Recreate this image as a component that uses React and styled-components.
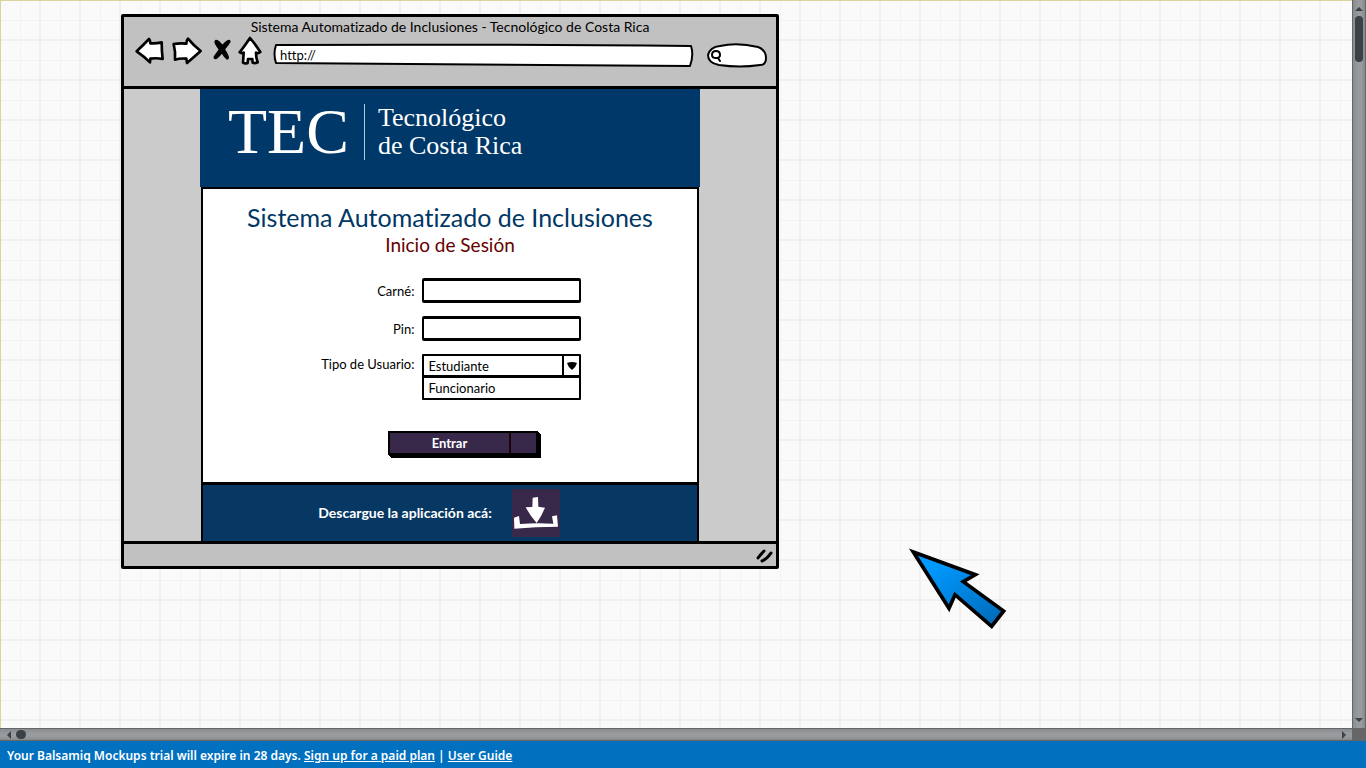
import React from "react";
import styled, { createGlobalStyle } from "styled-components";

const Global = createGlobalStyle`
  * { box-sizing: border-box; }
  body { margin: 0; overflow: hidden; }
  h1, h2, p, ul { margin: 0; padding: 0; }
  button, input, select { font: inherit; color: inherit; }
`;

const sketchFont = `Lato, "Open Sans", sans-serif`;

const Page = styled.div`
  display: grid;
  grid-template-columns: minmax(0, 1fr) 14px;
  grid-template-rows: minmax(0, 1fr) 13px 27px;
  height: 100vh;
  background: #666;
  font-family: ${sketchFont};
  font-size: 13px;
  font-variant-ligatures: none;
  line-height: 20px;
  color: #000;
`;

const Canvas = styled.main`
  position: relative;
  overflow: hidden;
  padding: 13px 80px 20px 120px;
  border-top: 1px solid #dcd29b;
  border-left: 1px solid #dcd29b;
  background-color: #fafafa;
  background-image:
    linear-gradient(#f0f0f0 2px, transparent 2px),
    linear-gradient(90deg, #f0f0f0 2px, transparent 2px),
    linear-gradient(#f3f3f3 1px, transparent 1px),
    linear-gradient(90deg, #f3f3f3 1px, transparent 1px);
  background-size: 40px 40px;
  background-position: 0 -2px, -2px 0, 0 19px, 19px 0;
`;

const ScrollTrack = styled.div`
  display: flex;
  align-items: center;
  justify-content: space-between;
  flex-direction: ${(p) => (p.$vertical ? "column" : "row")};
  padding: ${(p) => (p.$vertical ? "7px 0 6px" : "0 6px 0 7px")};
  border: solid #666;
  border-width: ${(p) => (p.$vertical ? "0 1px" : "1px 0")};
  background: linear-gradient(${(p) => (p.$vertical ? "90deg" : "180deg")}, #888c8f, #979b9e 40%, #979b9e 70%, #85898c);
`;

const ScrollGroup = styled.div`
  display: flex;
  align-items: center;
  gap: 5px;
  flex-direction: ${(p) => (p.$vertical ? "column" : "row")};
`;

const Thumb = styled.div`
  width: ${(p) => (p.$vertical ? "8px" : "10px")};
  height: ${(p) => (p.$vertical ? "46px" : "9px")};
  border-radius: 5px;
  background: #3a4147;
`;

const Window = styled.section`
  position: relative;
  width: 100%;
  max-width: 658px;
  border: 3px solid #000;
  border-radius: 2px;
  background: #cbcbcb;
`;

const WindowHeader = styled.header`
  padding-bottom: 17px;
  border-bottom: 3px solid #000;
  background: #c1c1c1;
`;

const WindowTitle = styled.p`
  font-size: 14px;
  text-align: center;
`;

const Toolbar = styled.div`
  display: flex;
  align-items: flex-start;
  gap: 6px;
  height: 32px;
  padding: 0 6px 0 11px;
`;

const ToolButton = styled.button`
  flex: none;
  width: ${(p) => p.$width}px;
  height: 29px;
  padding: 0;
  border: 0;
  background: none;
  svg { display: block; overflow: visible; }
`;

const SketchField = styled.label`
  position: relative;
  display: flex;
  align-items: flex-start;
  align-self: flex-end;
  flex: ${(p) => (p.$grow ? "1" : "none")};
  width: ${(p) => (p.$grow ? "auto" : "68px")};
  height: 26px;
`;

const FieldOutline = styled.svg`
  position: absolute;
  inset: 0;
  width: 100%;
  height: 100%;
  path {
    fill: #fff;
    stroke: #000;
    stroke-width: 2px;
    stroke-linejoin: round;
    vector-effect: non-scaling-stroke;
  }
`;

const BareInput = styled.input`
  position: relative;
  width: 100%;
  min-width: 0;
  height: 23px;
  padding: 0 10px;
  border: 0;
  outline: 0;
  background: transparent;
`;

const Glass = styled.svg`
  position: relative;
  flex: none;
  margin: 7px 0 0 8px;
`;

const Content = styled.div`
  width: 100%;
  max-width: 500px;
  margin: 0 auto;
`;

const Banner = styled.div`
  display: flex;
  align-items: flex-start;
  height: 98px;
  padding: 15px 28px;
  background: #003869;
  color: #fff;
  font-family: "Liberation Serif", serif;
`;

const BannerMark = styled.div`
  padding-right: 15px;
  border-right: 1px solid #b5c6d6;
  font-size: 64px;
  line-height: 56px;
`;

const BannerName = styled.div`
  padding-left: 13px;
  font-size: 26px;
  line-height: 28px;
`;

const Panel = styled.div`
  margin: 0 1px;
  padding-top: 14px;
  border: solid #000;
  border-width: 2px 2px 3px;
  background: #fff;
`;

const Heading = styled.h1`
  font-size: 25px;
  line-height: 28px;
  font-weight: 400;
  text-align: center;
  color: #003764;
`;

const Subheading = styled.h2`
  font-size: 19px;
  line-height: 28px;
  font-weight: 400;
  text-align: center;
  color: #660000;
`;

const Form = styled.form`
  padding: 19px 0 27px;
`;

const FormRow = styled.div`
  display: grid;
  grid-template-columns: calc(43% - 1px) 159px;
  column-gap: 8px;
  margin-bottom: ${(p) => (p.$last ? "31px" : "13px")};
`;

const RowLabel = styled.label`
  padding-top: ${(p) => (p.$raised ? "0" : "3px")};
  text-align: right;
`;

const TextBox = styled.input`
  width: 100%;
  height: 25px;
  padding: 0 5px;
  border: 2px solid #000;
  border-top-width: 3px;
  border-bottom-width: 3px;
  border-radius: 2px;
  background: #fff;
`;

const SelectWrap = styled.div`
  position: relative;
  margin-bottom: -2px;
  svg { position: absolute; right: 4px; top: 8px; pointer-events: none; }
  &::after {
    content: "";
    position: absolute;
    right: 17px;
    top: 0;
    width: 2px;
    height: 100%;
    background: #000;
  }
`;

const Select = styled.select`
  display: block;
  appearance: none;
  width: 100%;
  height: 23px;
  padding: 0 4px;
  border: 2px solid #000;
  border-radius: 1px;
  background: #fff;
`;

const Options = styled.ul`
  position: relative;
  list-style: none;
  padding: 0 4px;
  border: 2px solid #000;
  border-top-width: 3px;
  border-radius: 1px;
  background: #fff;
`;

const Submit = styled.button`
  display: flex;
  width: 150px;
  height: 24px;
  margin-left: 185px;
  padding: 0;
  border: 2px solid #000;
  background: #38284a;
  box-shadow: 1px 1px #000, 2px 2px #000, 3px 3px #000;
  color: #fff;
  font-weight: 700;
  line-height: 20px;
`;

const SubmitText = styled.span`
  flex: 1;
`;

const SubmitSide = styled.span`
  width: 27px;
  height: 20px;
  border-left: 2px solid #1c0308;
`;

const Download = styled.div`
  display: flex;
  align-items: center;
  justify-content: center;
  gap: 20px;
  margin: 0 1px;
  height: 56px;
  padding-right: 22px;
  border: solid #000;
  border-width: 0 2px;
  background: #073763;
  color: #fff;
  font-size: 14px;
  font-weight: 700;
`;

const DownloadButton = styled.button`
  width: 48px;
  height: 48px;
  padding: 0;
  border: 0;
  background: #38284a;
  svg { display: block; }
`;

const WindowFooter = styled.footer`
  display: flex;
  justify-content: flex-end;
  height: 25px;
  padding: 5px 2px 0;
  border-top: 3px solid #000;
  background: #c1c1c1;
`;

const Pointer = styled.svg`
  position: absolute;
  left: 906px;
  top: 546px;
`;

const Notice = styled.footer`
  grid-column: 1 / -1;
  padding: 5px 7px 0;
  background: #0070bf;
  color: #fff;
  font-family: "Noto Sans", "Open Sans", sans-serif;
  font-size: 12px;
  font-weight: 600;
  line-height: 20px;
  a { color: inherit; }
`;

const iconStroke = { fill: "#fff", stroke: "#000", strokeWidth: 8, strokeLinejoin: "round", strokeLinecap: "round" };

function ToolIcon({ label, x, width, children }) {
  return (
    <ToolButton type="button" aria-label={label} $width={width}>
      <svg width={width} height="29" viewBox={`${x} 87 ${width * 3} 87`}>{children}</svg>
    </ToolButton>
  );
}

function Arrow({ d, w, h }) {
  return (
    <svg width={w} height={h} viewBox={`0 0 ${w} ${h}`}><path d={d} fill="#3a4147" /></svg>
  );
}

export default function App() {
  return (
    <Page>
      <Global />
      <Canvas>
        <Window>
          <WindowHeader>
            <WindowTitle>Sistema Automatizado de Inclusiones - Tecnológico de Costa Rica</WindowTitle>
            <Toolbar>
              <ToolIcon label="Atrás" x={60} width={30}>
                <path {...iconStroke} d="M65 130 Q84 112 102 93 Q106 97 106 106 Q124 107 140 103 Q140 130 143 153 Q125 149 106 152 L105 163 Q87 145 65 130Z" />
              </ToolIcon>
              <ToolIcon label="Adelante" x={168} width={32}>
                <path {...iconStroke} d="M176 108 Q195 105 214 107 Q214 98 219 92 Q236 113 257 129 Q237 147 216 165 L214 152 Q196 150 180 155 Q182 132 176 108Z" />
              </ToolIcon>
              <ToolIcon label="Detener" x={282} width={23}>
                <path stroke="#000" strokeWidth="4" strokeLinejoin="round" d="M303 97 Q298 99 302 108 Q308 118 313 125 Q304 137 298 146 Q296 153 304 151 Q313 145 321 134 Q329 148 336 153 Q342 152 339 144 Q334 132 328 124 Q339 111 345 101 Q345 96 339 98 Q329 104 322 113 Q313 99 303 97Z" />
              </ToolIcon>
              <ToolIcon label="Inicio" x={369} width={26}>
                <path {...iconStroke} d="M405 90 Q421 109 436 132 Q430 137 423 134 Q423 150 428 163 Q419 167 413 164 L412 153 L399 153 L398 165 Q390 168 384 164 L386 134 Q379 137 374 133 Q389 114 405 90Z" />
              </ToolIcon>
              <SketchField $grow>
                <FieldOutline viewBox="0 0 426 26" preserveAspectRatio="none">
                  <path d="M6 2 Q200 1 421 3 Q424 12 420 23 Q210 22 6 20 Q3 11 6 2Z" />
                </FieldOutline>
                <BareInput aria-label="Dirección" defaultValue="http://" />
              </SketchField>
              <SketchField>
                <FieldOutline viewBox="0 0 68 26" preserveAspectRatio="none">
                  <path d="M18 3 Q35 -1 56 4 Q64 7 64 15 Q64 22 58 22 Q38 25 17 22 Q6 20 6 12 Q8 4 18 3Z" />
                </FieldOutline>
                <Glass width="12" height="12" viewBox="0 0 12 12" fill="none" stroke="#000" strokeWidth="2" strokeLinecap="round">
                  <path d="M6 1 Q2 1 2 5 Q2 8 6 8 Q10 8 10 5 Q10 1 6 1Z M8 8 L10 11" />
                </Glass>
                <BareInput aria-label="Buscar" />
              </SketchField>
            </Toolbar>
          </WindowHeader>

          <Content>
            <Banner>
              <BannerMark>TEC</BannerMark>
              <BannerName>Tecnológico<br />de Costa Rica</BannerName>
            </Banner>
            <Panel>
              <Heading>Sistema Automatizado de Inclusiones</Heading>
              <Subheading>Inicio de Sesión</Subheading>
              <Form onSubmit={(e) => e.preventDefault()}>
                <FormRow>
                  <RowLabel htmlFor="carne">Carné:</RowLabel>
                  <TextBox id="carne" />
                </FormRow>
                <FormRow>
                  <RowLabel htmlFor="pin">Pin:</RowLabel>
                  <TextBox id="pin" type="password" />
                </FormRow>
                <FormRow $last>
                  <RowLabel htmlFor="tipo" $raised>Tipo de Usuario:</RowLabel>
                  <div>
                    <SelectWrap>
                      <Select id="tipo" defaultValue="Estudiante">
                        <option>Estudiante</option>
                        <option>Funcionario</option>
                      </Select>
                      <svg width="10" height="8" viewBox="0 0 10 8"><path d="M0 1 Q5 -1 10 1 Q9 5 5 8 Q1 5 0 1Z" /></svg>
                    </SelectWrap>
                    <Options><li>Funcionario</li></Options>
                  </div>
                </FormRow>
                <Submit type="submit">
                  <SubmitText>Entrar</SubmitText>
                  <SubmitSide />
                </Submit>
              </Form>
            </Panel>
            <Download>
              <span>Descargue la aplicación acá:</span>
              <DownloadButton type="button" aria-label="Descargar">
                <svg width="48" height="48" viewBox="600 208 144 144" fill="#fff">
                  <path d="M662 234 L678 232 L679 261 L699 264 Q690 287 674 310 Q655 289 641 263 L661 262Z" />
                  <path d="M606 294 L621 289 L624 313 Q672 309 724 312 L720 290 L735 287 L738 321 Q670 321 607 327Z" />
                </svg>
              </DownloadButton>
            </Download>
          </Content>

          <WindowFooter>
            <svg width="18" height="16" viewBox="0 0 18 16" fill="none" stroke="#000" strokeWidth="3" strokeLinecap="round">
              <path d="M2 9 Q4 6 8 2 M6 12 Q11 10 15 4" />
            </svg>
          </WindowFooter>
        </Window>

        <Pointer width="100" height="84" viewBox="650 230 300 252">
          <defs>
            <linearGradient id="pointer" x1="0" y1="0" x2="1" y2="1">
              <stop offset="0.2" stopColor="#0099ff" />
              <stop offset="1" stopColor="#0068b4" />
            </linearGradient>
          </defs>
          <path d="M669 245 L855 313 L819 334 L940 422 L904 468 L794 373 L776 414Z" fill="url(#pointer)" stroke="#000" strokeWidth="11" />
        </Pointer>
      </Canvas>

      <ScrollTrack $vertical>
        <ScrollGroup $vertical>
          <Arrow w={8} h={4} d="M4 0 L8 4 H0Z" />
          <Thumb $vertical />
        </ScrollGroup>
        <Arrow w={8} h={4} d="M0 0 H8 L4 4Z" />
      </ScrollTrack>
      <ScrollTrack>
        <ScrollGroup>
          <Arrow w={4} h={8} d="M4 0 V8 L0 4Z" />
          <Thumb />
        </ScrollGroup>
        <Arrow w={4} h={8} d="M0 0 L4 4 L0 8Z" />
      </ScrollTrack>
      <div />
      <Notice>
        Your Balsamiq Mockups trial will expire in 28 days. <a href="#plan">Sign up for a paid plan</a> | <a href="#guide">User Guide</a>
      </Notice>
    </Page>
  );
}
